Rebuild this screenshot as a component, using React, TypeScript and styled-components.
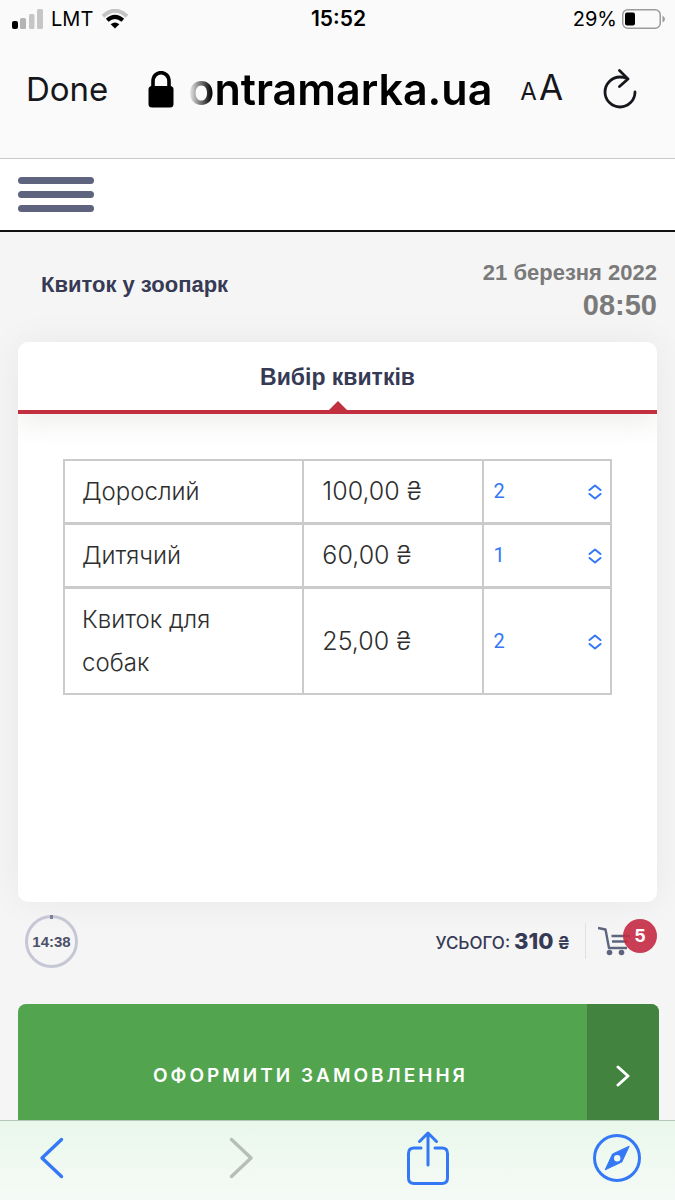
import React, { useState } from "react";
import styled, { createGlobalStyle } from "styled-components";

const ink = "#363a55";
const blue = "#3478f6";

const GlobalStyle = createGlobalStyle`
  *, *::before, *::after { box-sizing: border-box; }
  body { margin: 0; background: #f5f5f5; font-family: Inter, "Liberation Sans", sans-serif; }
  button { border: 0; padding: 0; background: none; font-family: inherit; color: inherit; cursor: pointer; }
  svg { display: block; }
`;

const Screen = styled.div`
  display: flex;
  flex-direction: column;
  height: 100vh;
  overflow: hidden;
`;

const BrowserTop = styled.header`
  flex: none;
  background: #fafafa;
  border-bottom: 1px solid #c8c8c8;
  color: #000;
`;

const StatusBar = styled.div`
  display: grid;
  grid-template-columns: 1fr auto 1fr;
  align-items: center;
  height: 38px;
  padding: 0 10px 0 12px;
  font-size: 20px;
  line-height: 24px;
`;

const StatusGroup = styled.div<{ $end?: boolean }>`
  display: flex;
  align-items: center;
  justify-content: ${(p) => (p.$end ? "flex-end" : "flex-start")};
  gap: ${(p) => (p.$end ? 5 : 8)}px;
`;

const Clock = styled.time`
  font-size: 21px;
  font-weight: 600;
`;

const AddressBar = styled.div`
  display: flex;
  align-items: center;
  justify-content: space-between;
  height: 104px;
  margin-bottom: 16px;
  padding: 0 38px 2px 26px;
`;

const DoneButton = styled.button`
  font-size: 33px;
  line-height: 42px;
  color: #15171c;
`;

const AddressGroup = styled.div`
  display: flex;
  align-items: center;
  gap: 28px;
`;

const Address = styled.div`
  display: flex;
  align-items: center;
  gap: 14px;
`;

const Host = styled.span`
  font-size: 43px;
  line-height: 54px;
  font-weight: 600;
  mask-image: linear-gradient(to right, transparent 0, #000 24px);
`;

const TextSizeButton = styled.button`
  display: flex;
  align-items: baseline;
  gap: 2px;
  font-size: 35px;
  line-height: 42px;
  color: #15171c;
`;

const SmallLetter = styled.span`
  font-size: 24px;
`;

const IconButton = styled.button`
  display: flex;
  align-items: center;
  justify-content: center;
`;

const SiteHeader = styled.div`
  flex: none;
  display: flex;
  align-items: center;
  height: 73px;
  padding: 0 18px;
  background: #fff;
  border-bottom: 2px solid #111;
`;

const MenuButton = styled.button`
  display: flex;
  flex-direction: column;
  gap: 7px;
`;

const MenuLine = styled.span`
  width: 76px;
  height: 7px;
  border-radius: 4px;
  background: #5f647e;
`;

const Content = styled.main`
  flex: 1;
  min-height: 0;
  overflow-y: auto;
  scrollbar-width: none;
  background: #f5f5f5;
`;

const EventHeader = styled.div`
  display: flex;
  justify-content: space-between;
  height: 110px;
  padding: 26px 18px 0 41px;
  font-family: "Liberation Sans", sans-serif;
  font-weight: 700;
`;

const EventName = styled.h1`
  margin: 14px 0 0;
  font-size: 22px;
  line-height: 26px;
  color: ${ink};
`;

const EventDate = styled.div`
  text-align: right;
  color: #7a7a7a;
  font-size: 22px;
  line-height: 30px;
`;

const EventTime = styled.div`
  font-size: 29px;
  line-height: 34px;
`;

const Card = styled.section`
  min-height: 560px;
  margin: 0 18px;
  border-radius: 10px;
  overflow: hidden;
  background: #fff;
  box-shadow: 0 0 36px rgba(0, 0, 0, 0.06);
`;

const CardTitle = styled.h2`
  position: relative;
  margin: 0;
  height: 72px;
  border-bottom: 4px solid #c22f3f;
  box-shadow: 0 8px 28px rgba(60, 50, 30, 0.09);
  text-align: center;
  font-family: "Liberation Sans", sans-serif;
  font-size: 23px;
  line-height: 70px;
  color: ${ink};

  &::after {
    content: "";
    position: absolute;
    left: calc(50% - 9px);
    bottom: 0;
    border: 9px solid transparent;
    border-top: 0;
    border-bottom-color: #c22f3f;
  }
`;

const TicketTable = styled.table`
  width: calc(100% - 90px);
  margin: 45px 45px 0;
  border-spacing: 0;
  table-layout: fixed;
  color: #2e2e2e;
  font-size: 25px;
  line-height: 43px;
  font-weight: 300;
`;

const Cell = styled.td`
  padding: 9px 18px;
  border: solid #cbcbcb;
  border-width: 2px 0 1px 2px;

  tr:last-child > & { border-bottom-width: 2px; }
`;

const NameCell = styled(Cell)`
  width: 43.6%;
  padding-left: 17px;
  padding-right: 40px;
  font-size: 24px;
`;

const PriceCell = styled(Cell)`
  width: 32.8%;
`;

const QuantityCell = styled(Cell)`
  padding-left: 8px;
  padding-right: 8px;
  border-right-width: 2px;
`;

const SelectBox = styled.label`
  position: relative;
  display: block;
  color: ${blue};

  svg { position: absolute; right: 0; top: 14px; pointer-events: none; }
`;

const Quantity = styled.select`
  display: block;
  width: 100%;
  height: 43px;
  padding: 0 0 0 1px;
  border: 0;
  appearance: none;
  background: transparent;
  color: ${blue};
  font: 400 20px/43px Roboto, sans-serif;
`;

const Summary = styled.div`
  display: flex;
  align-items: center;
  justify-content: space-between;
  height: 78px;
  margin-bottom: 24px;
  padding: 0 18px 0 25px;
`;

const Timer = styled.div`
  position: relative;
  display: grid;
  place-items: center;
  width: 53px;
  height: 53px;
  border: 3px solid #c6c7d5;
  border-radius: 50%;
  color: #4c5068;
  font-family: "Liberation Sans", sans-serif;
  font-size: 15px;
  font-weight: 700;

  &::before {
    content: "";
    position: absolute;
    top: -3px;
    width: 3px;
    height: 4px;
    background: #7c8096;
  }
`;

const Basket = styled.div`
  display: flex;
  align-items: center;
`;

const Total = styled.p`
  display: flex;
  align-items: baseline;
  gap: 4px;
  margin: 0;
  padding: 2px 15px 0 0;
  color: ${ink};
  font-size: 17px;
  line-height: 32px;
  font-weight: 500;
  border-right: 1px solid #dfe0ea;
`;

const Amount = styled.strong`
  font-size: 22px;
  font-weight: 800;
`;

const Currency = styled.span`
  font-weight: 700;
`;

const CartButton = styled.button`
  position: relative;
  width: 59px;
  height: 34px;
  margin-left: 12px;
`;

const Badge = styled.span`
  position: absolute;
  right: 0;
  top: -5px;
  width: 34px;
  height: 34px;
  border-radius: 50%;
  background: rgba(196, 42, 68, 0.9);
  color: #fff;
  font-size: 18px;
  line-height: 34px;
  font-weight: 700;
`;

const Checkout = styled.button`
  display: flex;
  width: calc(100% - 34px);
  height: 144px;
  margin: 0 16px 0 18px;
  border-radius: 8px;
  overflow: hidden;
  background: #52a44f;
  color: #fff;
`;

const CheckoutLabel = styled.span`
  flex: 1;
  padding-left: 16px;
  font-size: 19px;
  line-height: 144px;
  font-weight: 600;
  letter-spacing: 3px;
`;

const CheckoutArrow = styled.span`
  display: grid;
  place-items: center;
  width: 72px;
  height: 144px;
  background: #42843f;
`;

const Toolbar = styled.nav`
  flex: none;
  display: flex;
  align-items: center;
  justify-content: space-between;
  height: 80px;
  padding: 0 34px 5px 27px;
  border-top: 1px solid #b5c9b7;
  background: linear-gradient(#e9f8eb, #f5faf6);

  ${IconButton} { width: 48px; }
`;

const SignalIcon = () => (
  <svg width="31" height="20" viewBox="0 0 31 20" aria-hidden="true">
    <rect x="0" y="12" width="6" height="8" rx="2" fill="#000" />
    <rect x="8" y="9" width="6" height="11" rx="1.5" fill="#b4b4b4" />
    <rect x="17" y="5" width="5.500" height="15" rx="1.5" fill="#c6c6c6" />
    <rect x="25" y="0" width="6" height="20" rx="1.5" fill="#c6c6c6" />
  </svg>
);

const WifiIcon = () => (
  <svg width="28" height="20" viewBox="0 0 28 20" fill="none" aria-hidden="true">
    <path d="M2 7.200Q14-3.800 26 7.200" stroke="#c4c4c4" strokeWidth="4" />
    <path d="M6.200 11.300Q14 4.300 21.800 11.300" stroke="#000" strokeWidth="4" />
    <path d="M9.700 15.200Q14 11.600 18.300 15.200L14 19.500Z" fill="#000" />
  </svg>
);

const BatteryIcon = () => (
  <svg width="43" height="20" viewBox="0 0 43 20" aria-hidden="true">
    <rect x="0.750" y="0.750" width="37.500" height="18.500" rx="5" fill="none" stroke="#9b9b9b" strokeWidth="1.500" />
    <rect x="3" y="3.500" width="10" height="13" rx="2" />
    <path d="M40.500 6.500Q43 8 43 10T40.500 13.500Z" fill="#9b9b9b" />
  </svg>
);

const LockIcon = () => (
  <svg width="26" height="37" viewBox="0 0 26 37" aria-hidden="true">
    <rect x="0.500" y="15" width="25" height="21.500" rx="3.500" />
    <path d="M5 17V10.500C5 -1.300 21 -1.300 21 10.500V17" fill="none" stroke="#000" strokeWidth="3.600" />
  </svg>
);

const ReloadIcon = () => (
  <svg width="34" height="40" viewBox="0 0 34 40" fill="none" stroke="#15171c" strokeWidth="2.800" strokeLinecap="round" strokeLinejoin="round" aria-hidden="true">
    <path d="M32 23A15 15 0 1 1 17 8Q21 8 24 9.500" />
    <path d="M16.500 1.500L25 10L16.500 17.500" />
  </svg>
);

const UpDownIcon = () => (
  <svg width="14" height="16" viewBox="0 0 14 16" fill="none" stroke={blue} strokeWidth="2" strokeLinecap="round" strokeLinejoin="round" aria-hidden="true">
    <path d="M1.500 6L7 1.500L12.500 6M1.500 10L7 14.500L12.500 10" />
  </svg>
);

const CartIcon = () => (
  <svg width="33" height="30" viewBox="0 0 33 30" fill="none" stroke="#5f647e" strokeWidth="2.400" strokeLinejoin="round" aria-hidden="true">
    <path d="M0 2L7.500 3.500L11 22H29" />
    <path d="M13.500 10H32M14 15.500H30" />
    <circle cx="11.500" cy="26.500" r="2.800" fill="#5f647e" stroke="none" />
    <circle cx="23.500" cy="26.500" r="2.800" fill="#5f647e" stroke="none" />
  </svg>
);

const Chevron = ({ back, color }: { back?: boolean; color: string }) => (
  <svg width="26" height="42" viewBox="0 0 26 42" fill="none" stroke={color} strokeWidth="3.400" strokeLinecap="round" strokeLinejoin="round" aria-hidden="true">
    <path d={back ? "M23.500 2.500L4 21L23.500 39.500" : "M4.500 2.500L24 21L4.500 39.500"} />
  </svg>
);

const ArrowIcon = () => (
  <svg width="14" height="22" viewBox="0 0 14 22" fill="none" stroke="#fff" strokeWidth="3" strokeLinecap="round" strokeLinejoin="round" aria-hidden="true">
    <path d="M2 2L12 11L2 20" />
  </svg>
);

const ShareIcon = () => (
  <svg width="42" height="54" viewBox="0 0 42 54" fill="none" stroke={blue} strokeWidth="3" strokeLinecap="round" strokeLinejoin="round" aria-hidden="true">
    <path d="M14 17H7Q1.500 17 1.500 22.500V47Q1.500 52.500 7 52.500H35Q40.500 52.500 40.500 47V22.500Q40.500 17 35 17H28" />
    <path d="M21 34V2M12.500 10.500L21 2L29.500 10.500" />
  </svg>
);

const CompassIcon = () => (
  <svg width="48" height="48" viewBox="0 0 48 48" aria-hidden="true">
    <circle cx="24" cy="24" r="22.500" fill="none" stroke={blue} strokeWidth="3" />
    <path d="M36.200 12.200L28.800 28L12.200 35.800L19.500 20Z" fill={blue} stroke={blue} strokeLinejoin="round" />
    <circle cx="24.200" cy="24.200" r="3.200" fill="#eef9f0" />
  </svg>
);

const tickets = [
  { name: "Дорослий", price: "100,00 ₴", count: 2 },
  { name: "Дитячий", price: "60,00 ₴", count: 1 },
  { name: "Квиток для собак", price: "25,00 ₴", count: 2 },
];

function TicketRow({ name, price, count }: (typeof tickets)[number]) {
  const [value, setValue] = useState(count);
  return (
    <tr>
      <NameCell>{name}</NameCell>
      <PriceCell>{price}</PriceCell>
      <QuantityCell>
        <SelectBox>
          <Quantity aria-label={name} value={value} onChange={(e) => setValue(Number(e.target.value))}>
            {[0, 1, 2, 3, 4, 5].map((n) => (
              <option key={n} value={n}>{n}</option>
            ))}
          </Quantity>
          <UpDownIcon />
        </SelectBox>
      </QuantityCell>
    </tr>
  );
}

export default function App() {
  return (
    <Screen>
      <GlobalStyle />
      <BrowserTop>
        <StatusBar>
          <StatusGroup>
            <SignalIcon />
            <span>LMT</span>
            <WifiIcon />
          </StatusGroup>
          <Clock>15:52</Clock>
          <StatusGroup $end>
            <span>29%</span>
            <BatteryIcon />
          </StatusGroup>
        </StatusBar>
        <AddressBar>
          <DoneButton>Done</DoneButton>
          <AddressGroup>
            <Address>
              <LockIcon />
              <Host>ontramarka.ua</Host>
            </Address>
            <TextSizeButton aria-label="Text size">
              <SmallLetter>A</SmallLetter>
              <span>A</span>
            </TextSizeButton>
          </AddressGroup>
          <IconButton aria-label="Reload"><ReloadIcon /></IconButton>
        </AddressBar>
      </BrowserTop>
      <SiteHeader>
        <MenuButton aria-label="Меню">
          <MenuLine />
          <MenuLine />
          <MenuLine />
        </MenuButton>
      </SiteHeader>
      <Content>
        <EventHeader>
          <EventName>Квиток у зоопарк</EventName>
          <EventDate>
            21 березня 2022
            <EventTime>08:50</EventTime>
          </EventDate>
        </EventHeader>
        <Card>
          <CardTitle>Вибір квитків</CardTitle>
          <TicketTable>
            <tbody>
              {tickets.map((t) => (
                <TicketRow key={t.name} {...t} />
              ))}
            </tbody>
          </TicketTable>
        </Card>
        <Summary>
          <Timer>14:38</Timer>
          <Basket>
            <Total>
              УСЬОГО: <Amount>310</Amount> <Currency>₴</Currency>
            </Total>
            <CartButton aria-label="Кошик">
              <CartIcon />
              <Badge>5</Badge>
            </CartButton>
          </Basket>
        </Summary>
        <Checkout>
          <CheckoutLabel>ОФОРМИТИ ЗАМОВЛЕННЯ</CheckoutLabel>
          <CheckoutArrow><ArrowIcon /></CheckoutArrow>
        </Checkout>
      </Content>
      <Toolbar>
        <IconButton aria-label="Back"><Chevron back color={blue} /></IconButton>
        <IconButton aria-label="Forward"><Chevron color="#b7beb8" /></IconButton>
        <IconButton aria-label="Share"><ShareIcon /></IconButton>
        <IconButton aria-label="Bookmarks"><CompassIcon /></IconButton>
      </Toolbar>
    </Screen>
  );
}
